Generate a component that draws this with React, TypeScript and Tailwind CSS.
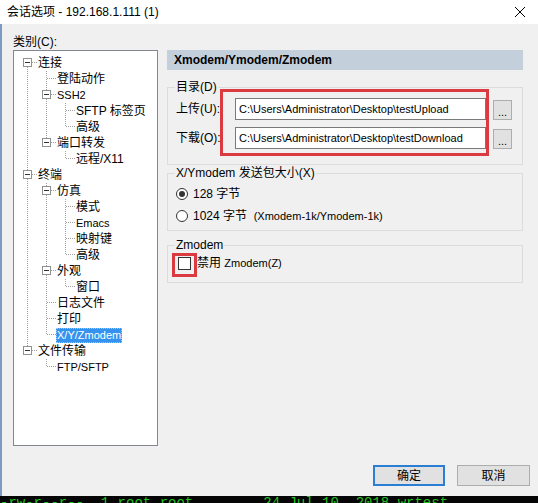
import React from 'react'

interface TreeNode {
  label: string
  children?: TreeNode[]
  selected?: boolean
}

interface TreeRow {
  label: string
  level: number
  hasChildren: boolean
  isLast: boolean
  isFirstRoot: boolean
  cont: boolean[]
  selected?: boolean
}

const tree: TreeNode[] = [
  {
    label: '连接',
    children: [
      { label: '登陆动作' },
      { label: 'SSH2', children: [{ label: 'SFTP 标签页' }, { label: '高级' }] },
      { label: '端口转发', children: [{ label: '远程/X11' }] },
    ],
  },
  {
    label: '终端',
    children: [
      {
        label: '仿真',
        children: [{ label: '模式' }, { label: 'Emacs' }, { label: '映射键' }, { label: '高级' }],
      },
      { label: '外观', children: [{ label: '窗口' }] },
      { label: '日志文件' },
      { label: '打印' },
      { label: 'X/Y/Zmodem', selected: true },
    ],
  },
  { label: '文件传输', children: [{ label: 'FTP/SFTP' }] },
]

// flatten the tree into rows, remembering which ancestor lines keep going
const flatten = (nodes: TreeNode[], level: number, cont: boolean[]): TreeRow[] => {
  const rows: TreeRow[] = []
  nodes.forEach((n, i) => {
    const isLast = i === nodes.length - 1
    rows.push({
      label: n.label,
      level,
      hasChildren: !!n.children,
      isLast,
      isFirstRoot: level === 0 && i === 0,
      cont,
      selected: n.selected,
    })
    if (n.children) rows.push(...flatten(n.children, level + 1, [...cont, !isLast]))
  })
  return rows
}

const rows = flatten(tree, 0, [])

const LINE = '#a0a0a0'
const isLatin = (s: string) => /^[\x00-\x7f]+$/.test(s)

const Guide: React.FC<{ row: TreeRow; col: number }> = ({ row, col }) => {
  const own = col === row.level
  return (
    <svg width="19" height="16" className="shrink-0 block">
      {!own && row.cont[col] && (
        <line x1="8.5" y1="0" x2="8.5" y2="16" stroke={LINE} strokeDasharray="1 1" />
      )}
      {own && (
        <>
          {!row.isFirstRoot && (
            <line x1="8.5" y1="0" x2="8.5" y2="8" stroke={LINE} strokeDasharray="1 1" />
          )}
          {!row.isLast && (
            <line x1="8.5" y1="8" x2="8.5" y2="16" stroke={LINE} strokeDasharray="1 1" />
          )}
          <line x1="9" y1="7.5" x2="19" y2="7.5" stroke={LINE} strokeDasharray="1 1" />
          {row.hasChildren && (
            <>
              <rect x="4.5" y="3.5" width="8" height="8" fill="#fff" stroke="#919191" />
              <line x1="6" y1="7.5" x2="11" y2="7.5" stroke="#333" />
            </>
          )}
        </>
      )}
    </svg>
  )
}

const GroupBox: React.FC<{ legend: string; className?: string; children: React.ReactNode }> = ({
  legend,
  className,
  children,
}) => (
  <div className={`relative border border-[#dcdcdc] ${className ?? ''}`}>
    <span className="absolute -top-[7px] left-[7px] px-[1px] bg-[#f0f0f0] leading-[12px] text-[12px]">
      {legend}
    </span>
    {children}
  </div>
)

const PathRow: React.FC<{ label: string; value: string }> = ({ label, value }) => (
  <div className="flex items-center h-[22px]">
    <span className="w-[59px] text-[12px] leading-[14px]">{label}</span>
    <div className="w-[251px] h-[22px] bg-white border border-[#7a7a7a] flex items-center pl-[3px] text-[11px] leading-[14px] whitespace-nowrap overflow-hidden">
      {value}
    </div>
    <button className="ml-[7px] mt-[1px] w-[19px] h-[20px] bg-[#e1e1e1] border border-[#adadad] text-[11px] leading-[10px] pt-[4px]">
      ...
    </button>
  </div>
)

const App: React.FC = () => {
  return (
    <div className="relative w-[538px] h-[503px] overflow-hidden bg-[#f0f0f0] flex flex-col text-black font-['Liberation_Sans','Noto_Sans_CJK_SC',sans-serif]">
      {/* Title bar */}
      <div className="h-[24px] bg-white flex items-center pl-[7px] pr-[10px] shrink-0">
        <span className="text-[12px] leading-[14px]">会话选项 - 192.168.1.111 (1)</span>
        <svg width="10" height="10" className="ml-auto mr-[3px]">
          <line x1="0" y1="0" x2="10" y2="10" stroke="#000" />
          <line x1="10" y1="0" x2="0" y2="10" stroke="#000" />
        </svg>
      </div>

      <div className="flex-1 flex flex-col border-l-2 border-[#7d9bc2]">
        {/* Main content */}
        <div className="flex pl-[11px]">
          {/* Category tree */}
          <div className="flex flex-col pt-[12px]">
            <span className="text-[12px] leading-[12px]">类别(C):</span>
            <div className="mt-[2px] w-[145px] h-[396px] bg-white border border-[#828790] pt-[4px] pl-[5px]">
              {rows.map((row, i) => (
                <div key={i} className="flex h-4 items-center">
                  {Array.from({ length: row.level + 1 }).map((_, c) => (
                    <Guide key={c} row={row} col={c} />
                  ))}
                  <span
                    className={`leading-[15px] whitespace-nowrap ${isLatin(row.label) ? 'text-[11px]' : 'text-[12px]'} ${
                      row.selected
                        ? 'bg-[#3592ee] text-white -ml-[1px] px-[1px] outline-1 outline-dotted outline-[#9fcaf5] -outline-offset-1'
                        : ''
                    }`}
                  >
                    {row.label}
                  </span>
                </div>
              ))}
            </div>
          </div>

          {/* Settings panel */}
          <div className="ml-[9px] mt-[26px] w-[356px] flex flex-col">
            <div className="h-[20px] bg-[#c3d0dc] flex items-center pl-[7px] text-[12px] font-bold leading-[14px]">
              Xmodem/Ymodem/Zmodem
            </div>

            <GroupBox legend="目录(D)" className="mt-[17px] pt-[10px] pb-[15px] pl-[8px]">
              <div className="flex flex-col gap-[7px]">
                <PathRow label="上传(U):" value="C:\Users\Administrator\Desktop\testUpload" />
                <PathRow label="下载(O):" value="C:\Users\Administrator\Desktop\testDownload" />
              </div>
            </GroupBox>

            <GroupBox legend="X/Ymodem 发送包大小(X)" className="mt-[8px] pt-[9px] pb-[3px] pl-[8px]">
              <div className="flex items-center h-[22px] gap-[5px]">
                <span className="w-[12px] h-[12px] rounded-full border border-[#333] bg-white flex items-center justify-center">
                  <span className="w-[6px] h-[6px] rounded-full bg-[#333]" />
                </span>
                <span className="text-[12px] leading-[14px]">128 字节</span>
              </div>
              <div className="flex items-center h-[22px] gap-[5px]">
                <span className="w-[12px] h-[12px] rounded-full border border-[#333] bg-white" />
                <span className="text-[12px] leading-[14px] whitespace-pre">
                  1024 字节{'  '}
                  <span className="text-[11px]">(Xmodem-1k/Ymodem-1k)</span>
                </span>
              </div>
            </GroupBox>

            <GroupBox legend="Zmodem" className="mt-[14px] pt-[6px] pb-[8px] pl-[10px]">
              <div className="flex items-center h-[22px] gap-[6px]">
                <span className="w-[13px] h-[13px] border border-[#333] bg-white" />
                <span className="text-[12px] leading-[14px]">
                  禁用 <span className="text-[11px]">Zmodem(Z)</span>
                </span>
              </div>
            </GroupBox>
          </div>
        </div>

        {/* Dialog buttons */}
        <div className="flex justify-end gap-[12px] pr-[8px] mt-[19px]">
          <button className="w-[72px] h-[21px] bg-[#e1e1e1] border-2 border-[#2a7fd4] text-[12px] leading-[14px]">
            确定
          </button>
          <button className="w-[73px] h-[21px] bg-[#e1e1e1] border border-[#adadad] text-[12px] leading-[14px]">
            取消
          </button>
        </div>
      </div>

      {/* Terminal behind the dialog */}
      <div className="h-[7px] shrink-0 bg-[#050505] overflow-hidden flex text-[14px] leading-[14px] text-[#22c322] font-['Liberation_Mono',monospace] whitespace-pre">
        <span>-rw-r--r--. 1 root root</span>
        <span className="ml-[70px]">24 Jul 10  2018 wrtest</span>
      </div>

      {/* Red annotation boxes */}
      <div className="absolute left-[220px] top-[89px] w-[269px] h-[67px] border-[3px] border-[#dc3a41]" />
      <div className="absolute left-[172px] top-[253px] w-[25px] h-[24px] border-[3px] border-[#dc3a41]" />
    </div>
  )
}

export default App
